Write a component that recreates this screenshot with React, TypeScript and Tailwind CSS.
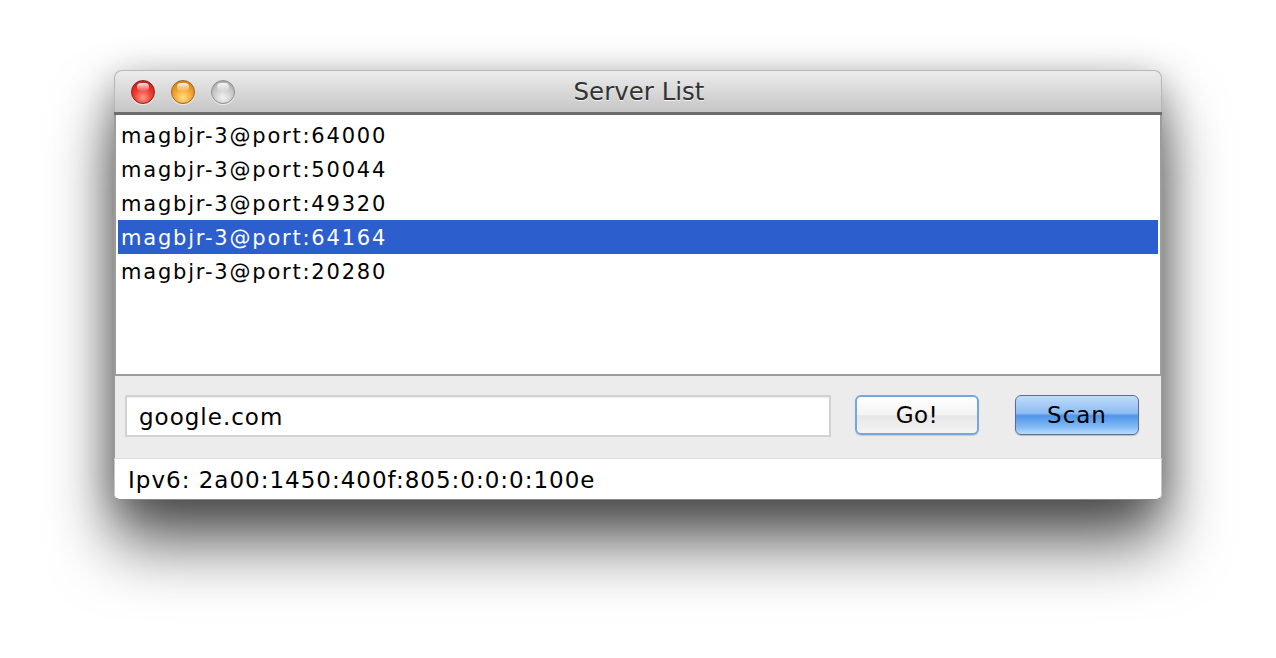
import React from "react";

const rows = [
  "magbjr-3@port:64000",
  "magbjr-3@port:50044",
  "magbjr-3@port:49320",
  "magbjr-3@port:64164",
  "magbjr-3@port:20280",
];

function Light({ kind }: { kind: "red" | "orange" | "gray" }) {
  const cls =
    kind === "red"
      ? "bg-[radial-gradient(circle_at_50%_75%,#ff9a8a_0%,#f0392f_45%,#b8120c_100%)] border-[#8e1f18]"
      : kind === "orange"
      ? "bg-[radial-gradient(circle_at_50%_75%,#ffe08a_0%,#f5a52f_45%,#c8710e_100%)] border-[#a3641c]"
      : "bg-[radial-gradient(circle_at_50%_75%,#f2f2f2_0%,#c9c9c9_50%,#9a9a9a_100%)] border-[#8d8d8d]";
  return (
    <div className={`relative w-[24px] h-[24px] rounded-full border ${cls} shadow-[0_1px_1px_rgba(255,255,255,0.7)]`}>
      <div className="absolute left-[5px] top-[2px] w-[12px] h-[8px] rounded-full bg-[linear-gradient(to_bottom,rgba(255,255,255,0.9),rgba(255,255,255,0.1))]" />
    </div>
  );
}

export default function App() {
  return (
    <div className="w-[1276px] h-[658px] bg-white pt-[70px] pl-[114px] overflow-hidden" style={{ fontFamily: '"DejaVu Sans", Verdana, sans-serif' }}>
      <div className="w-[1048px] h-[430px] flex flex-col rounded-t-[8px] rounded-b-[6px] shadow-[0_45px_65px_rgba(0,0,0,0.6),0_10px_40px_rgba(0,0,0,0.35)] bg-[#ececec]">
        {/* title bar */}
        <div className="relative h-[42px] rounded-t-[8px] bg-[linear-gradient(to_bottom,#ececec,#dcdcdc_40%,#c6c6c6)] border-t border-x border-[#b8b8b8] flex items-center">
          <div className="flex items-center gap-[16px] pl-[16px] pt-[1px]">
            <Light kind="red" />
            <Light kind="orange" />
            <Light kind="gray" />
          </div>
          <div className="absolute inset-0 flex items-center justify-center text-[24.5px] text-[#333333] [text-shadow:0_1px_0_rgba(255,255,255,0.8)] pt-[2px] pl-[2px]">
            Server List
          </div>
        </div>
        <div className="h-[3px] bg-[#6c6c6c]" />
        {/* list */}
        <div className="h-[261px] bg-white border-x-2 border-b-2 border-[#9c9c9c] px-[2px] pt-[3px]">
          {rows.map((r, i) => (
            <div
              key={r}
              className={`h-[34px] flex items-center pl-[3px] pt-[3px] text-[21px] tracking-[1.8px] ${
                i === 3 ? "bg-[#2c5ecd] text-white" : "text-black"
              }`}
            >
              {r}
            </div>
          ))}
        </div>
        {/* controls */}
        <div className="h-[82px] bg-[#ececec] border-x border-[#9a9a9a] flex items-start pt-[19px] pl-[10px]">
          <div className="w-[706px] h-[42px] bg-white border-2 border-[#d2d2d2] shadow-[inset_0_1px_1px_rgba(0,0,0,0.08)] flex items-center pl-[12px] pt-[2px] text-[23px] tracking-[1px] text-black">
            google.com
          </div>
          <div className="ml-[24px] w-[124px] h-[40px] rounded-[6px] border-2 border-[#76a6dc] bg-[linear-gradient(to_bottom,#ffffff,#f3f3f3_50%,#e6e6e6_52%,#f4f4f4)] flex items-center justify-center text-[23px] tracking-[0.5px] text-black shadow-[0_1px_1px_rgba(0,0,0,0.15)]">
            Go!
          </div>
          <div className="ml-[36px] w-[124px] h-[40px] rounded-[6px] border border-[#5d6e92] bg-[linear-gradient(to_bottom,#c2dcfb,#8dbcf3_45%,#4f94e8_52%,#7fb8f5_80%,#b6dcff)] flex items-center justify-center text-[23px] tracking-[1px] text-black shadow-[0_1px_1px_rgba(0,0,0,0.2)]">
            Scan
          </div>
        </div>
        {/* status */}
        <div className="h-[42px] bg-white border-t border-[#dedede] border-x border-x-[#c8c8c8] border-b border-b-[#8a8a8a] rounded-b-[6px] flex items-center pl-[13px] pt-[3px] text-[23px] tracking-[1px] text-black">
          Ipv6: 2a00:1450:400f:805:0:0:0:100e
        </div>
      </div>
    </div>
  );
}
